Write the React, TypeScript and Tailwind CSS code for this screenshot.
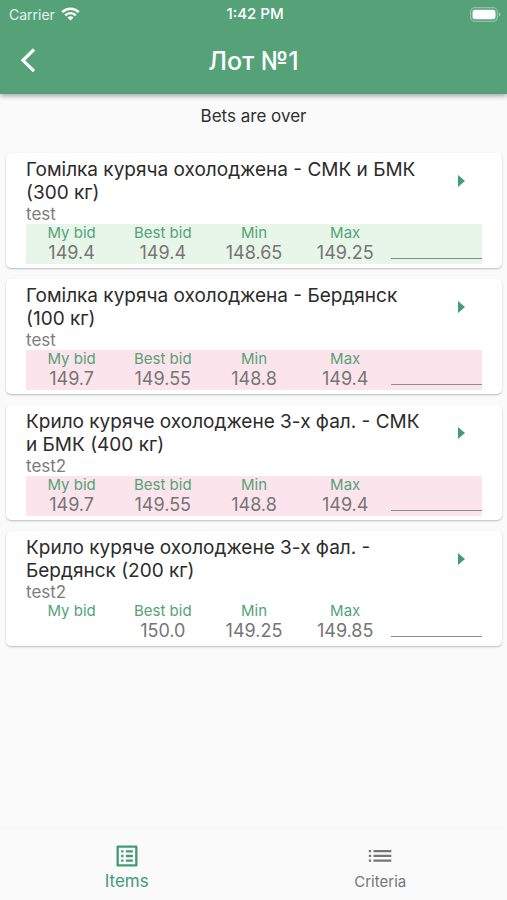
import React from 'react';

interface Lot {
  title: string;
  note: string;
  myBid: string;
  bestBid: string;
  min: string;
  max: string;
  status: 'winning' | 'losing' | 'none';
}

const lots: Lot[] = [
  { title: 'Гомілка куряча охолоджена - СМК и БМК (300 кг)', note: 'test', myBid: '149.4', bestBid: '149.4', min: '148.65', max: '149.25', status: 'winning' },
  { title: 'Гомілка куряча охолоджена - Бердянск (100 кг)', note: 'test', myBid: '149.7', bestBid: '149.55', min: '148.8', max: '149.4', status: 'losing' },
  { title: 'Крило куряче охолоджене 3-х фал. - СМК и БМК (400 кг)', note: 'test2', myBid: '149.7', bestBid: '149.55', min: '148.8', max: '149.4', status: 'losing' },
  { title: 'Крило куряче охолоджене 3-х фал. - Бердянск (200 кг)', note: 'test2', myBid: '', bestBid: '150.0', min: '149.25', max: '149.85', status: 'none' },
];

const statusColors = {
  winning: 'bg-[#e8f5e9]',
  losing: 'bg-[#fce4ec]',
  none: 'bg-white',
};

const StatusBar: React.FC = () => (
  <div className="grid h-7 grid-cols-3 items-center pl-[9px] pr-[6px] text-[14px] text-white">
    <div className="flex items-center gap-[6px] text-[#e2f3e9]">
      <span>Carrier</span>
      <svg width="19" height="14" viewBox="0 0 19 14" fill="none" aria-label="Wi-Fi">
        <path d="M1.2 5.2a11.8 11.8 0 0 1 16.6 0" stroke="#fff" strokeWidth="2.6" />
        <path d="M4.2 8.3a7.5 7.5 0 0 1 10.6 0" stroke="#fff" strokeWidth="2.4" />
        <path d="M9.5 13.6 6.4 10.5a4.4 4.4 0 0 1 6.2 0z" fill="#fff" />
      </svg>
    </div>
    <span className="text-center text-[15px] font-medium">1:42 PM</span>
    <svg className="justify-self-end" width="31" height="15" viewBox="0 0 31 15" fill="none" aria-label="Battery">
      <rect x="0.7" y="0.7" width="26.6" height="13.6" rx="4" stroke="#fff" strokeOpacity="0.35" strokeWidth="1.2" />
      <rect x="2.5" y="2.7" width="23" height="9.6" rx="2.4" fill="#fff" />
      <path d="M28.8 5.2q1.7.8 1.7 2.3t-1.7 2.3z" fill="#fff" fillOpacity="0.45" />
    </svg>
  </div>
);

const Header: React.FC = () => (
  <header className="relative z-10 bg-[#55a279] shadow-[0_2px_5px_rgba(0,0,0,0.35)]">
    <StatusBar />
    <div className="grid h-[66px] grid-cols-[56px_1fr_56px] items-center">
      <button type="button" aria-label="Back" className="flex h-12 items-center justify-center">
        <svg width="16" height="26" viewBox="0 0 16 26" fill="none" stroke="#fff" strokeWidth="3.2">
          <path d="M14 1.5 3 12.3l11 10.8" />
        </svg>
      </button>
      <h1 className="text-center text-[25px] leading-8 font-medium text-white">Лот №1</h1>
    </div>
  </header>
);

const Cell: React.FC<{ label: string; value: string }> = ({ label, value }) => (
  <div className="text-center">
    <dt className="text-[15px] leading-[18px] text-[#55a279]">{label}</dt>
    <dd className="h-[22px] text-[18px] leading-[22px] text-[#757575]">{value}</dd>
  </div>
);

const LotCard: React.FC<{ lot: Lot }> = ({ lot }) => (
  <li className="rounded-[5px] bg-white px-5 pt-[5px] pb-1 shadow-[0_1px_2px_rgba(0,0,0,0.25)]">
    <div className="flex items-start justify-between">
      <div className="flex-1 pr-2">
        <h2 className="text-[19px] leading-[23px] text-[#2b2b2b]">{lot.title}</h2>
        <p className="text-[17px] leading-[20px] text-[#7c7c7c]">{lot.note}</p>
      </div>
      <button type="button" aria-label="Open lot" className="flex h-[46px] w-[42px] items-center justify-center">
        <svg width="7" height="12" viewBox="0 0 7 12" fill="#439c74">
          <path d="M0 0 7 6 0 12z" />
        </svg>
      </button>
    </div>
    <div className={`grid grid-cols-5 ${statusColors[lot.status]}`}>
      <dl className="col-span-4 grid grid-cols-4">
        <Cell label="My bid" value={lot.myBid} />
        <Cell label="Best bid" value={lot.bestBid} />
        <Cell label="Min" value={lot.min} />
        <Cell label="Max" value={lot.max} />
      </dl>
      <input type="text" inputMode="decimal" aria-label="New bid" className="mb-[5px] w-full min-w-0 border-b border-[#8c8c8c] bg-transparent text-[18px] outline-none" />
    </div>
  </li>
);

const TabBar: React.FC = () => (
  <nav className="grid h-[72px] grid-cols-2 bg-[#fafafa] shadow-[0_-1px_3px_rgba(0,0,0,0.02)]">
    <a href="#items" aria-current="page" className="flex flex-col items-center pt-[14px] text-[#439c74]">
      <svg width="28" height="28" viewBox="0 0 24 24" fill="currentColor">
        <path d="M19 5v14H5V5h14m1.1-2H3.9c-.5 0-.9.4-.9.9v16.2c0 .4.4.9.9.9h16.2c.4 0 .9-.5.9-.9V3.9c0-.5-.5-.9-.9-.9zM11 7h6v2h-6V7zm0 4h6v2h-6v-2zm0 4h6v2h-6zM7 7h2v2H7zm0 4h2v2H7zm0 4h2v2H7z" />
      </svg>
      <span className="text-[17px] leading-[22px]">Items</span>
    </a>
    <a href="#criteria" className="flex flex-col items-center pt-[14px] text-[#757575]">
      <svg width="28" height="28" viewBox="0 0 24 24" fill="currentColor">
        <path d="M2.4 6.8h2v2h-2zM2.4 10.9h2v2h-2zM2.4 15h2v2h-2zM6.4 6.8h15.3v2H6.4zM6.4 10.9h15.3v2H6.4zM6.4 15h15.3v2H6.4z" />
      </svg>
      <span className="text-[15px] leading-6">Criteria</span>
    </a>
  </nav>
);

const App: React.FC = () => {
  return (
    <div className="flex min-h-screen flex-col bg-[#fafafa] font-['Inter',sans-serif]">
      <Header />
      <main className="flex-1">
        <p className="pt-[11px] text-center text-[17px] leading-[22px] text-[#303030]">Bets are over</p>
        <ul className="flex flex-col gap-[11px] pt-[26px] pr-[5px] pb-6 pl-[6px]">
          {lots.map((lot) => (
            <LotCard key={lot.title} lot={lot} />
          ))}
        </ul>
      </main>
      <TabBar />
    </div>
  );
};

export default App;
